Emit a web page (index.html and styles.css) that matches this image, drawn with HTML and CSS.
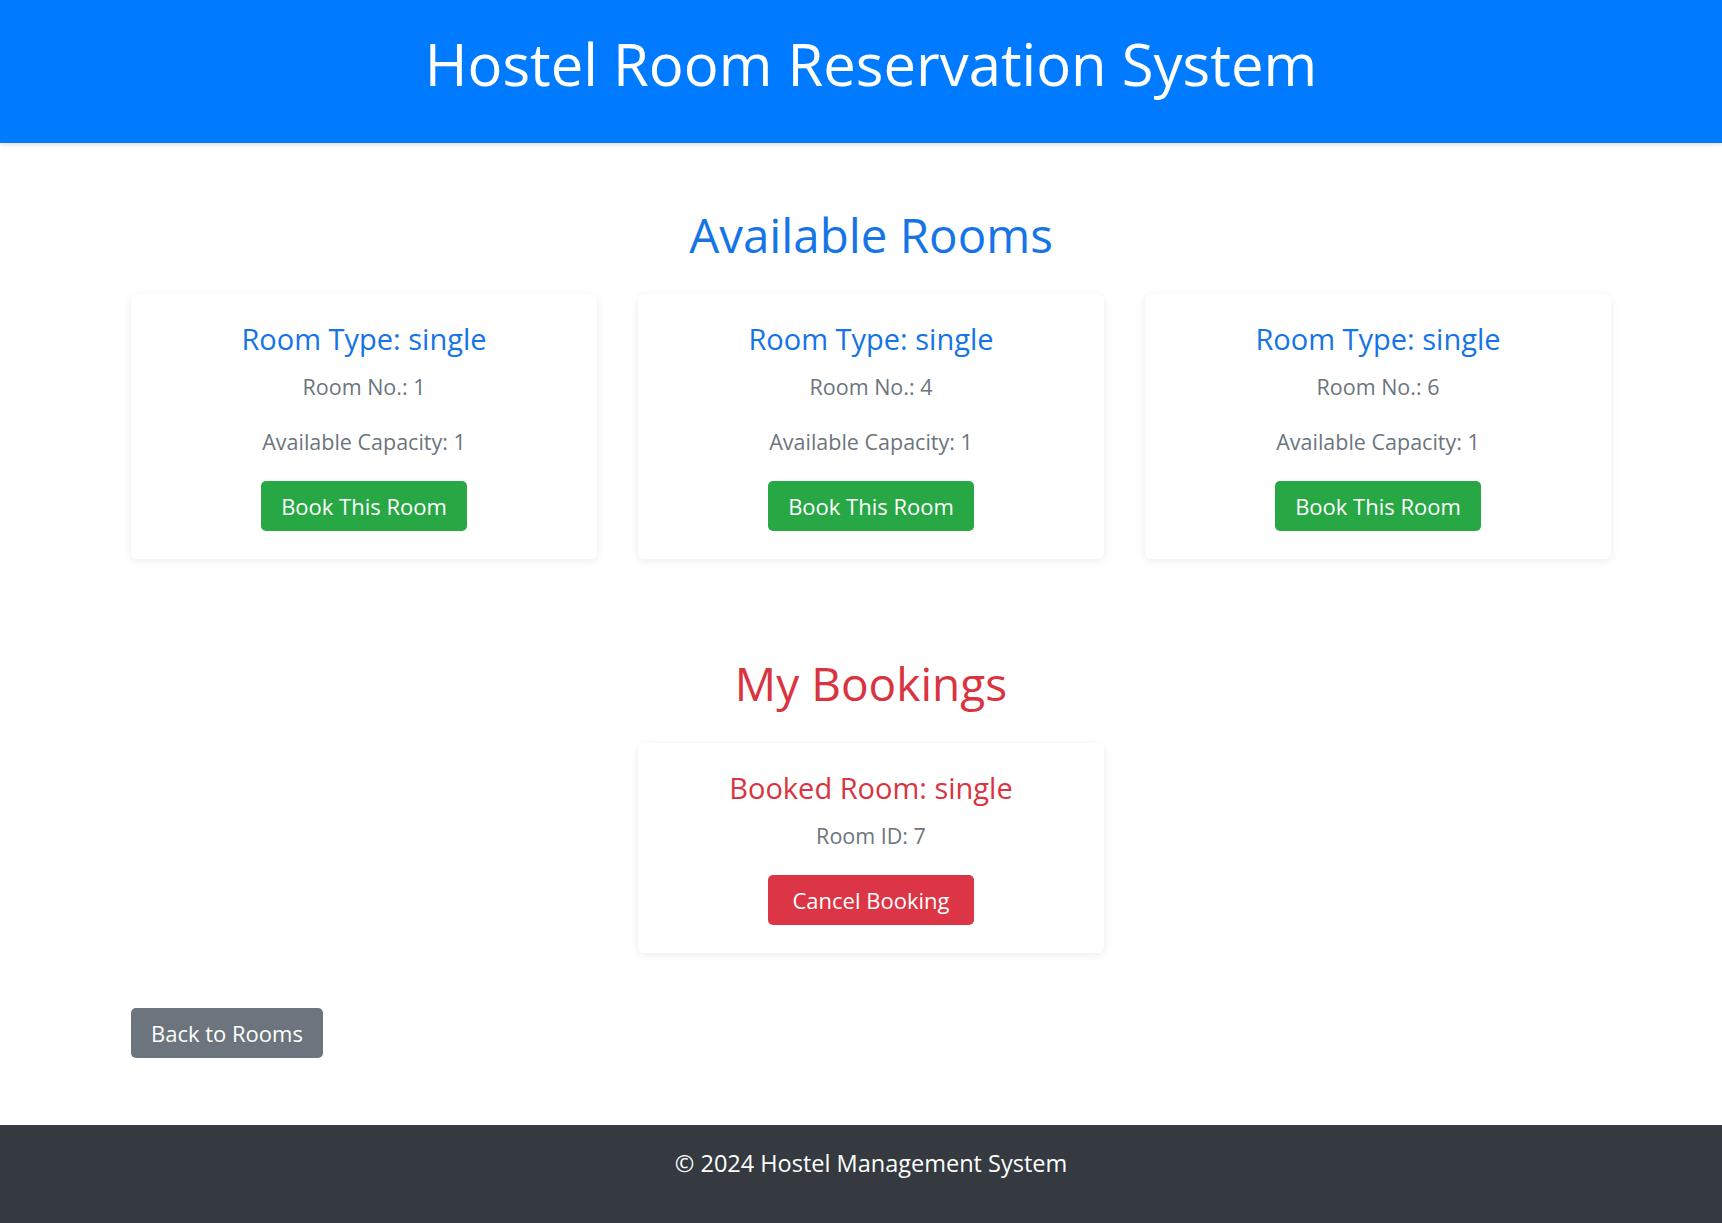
FILE: index.html
```html
<!DOCTYPE html>
<html lang="en">
<head>
<meta charset="utf-8">
<title>Hostel Room Reservation System</title>
<link rel="stylesheet" href="styles.css">
</head>
<body>
<header class="site-header">
  <h1 class="site-title">Hostel Room Reservation System</h1>
</header>
<main class="page">
  <div class="container">
    <section class="rooms-section">
      <h2 class="section-title section-title--blue">Available Rooms</h2>
      <div class="room-grid">
        <div class="card">
          <h3 class="card-title card-title--blue">Room Type: single</h3>
          <p class="card-text">Room No.: 1</p>
          <p class="card-text">Available Capacity: 1</p>
          <button class="btn btn-success">Book This Room</button>
        </div>
        <div class="card">
          <h3 class="card-title card-title--blue">Room Type: single</h3>
          <p class="card-text">Room No.: 4</p>
          <p class="card-text">Available Capacity: 1</p>
          <button class="btn btn-success">Book This Room</button>
        </div>
        <div class="card">
          <h3 class="card-title card-title--blue">Room Type: single</h3>
          <p class="card-text">Room No.: 6</p>
          <p class="card-text">Available Capacity: 1</p>
          <button class="btn btn-success">Book This Room</button>
        </div>
      </div>
    </section>
    <section class="bookings-section">
      <h2 class="section-title section-title--red">My Bookings</h2>
      <div class="booking-list">
        <div class="card booking-card">
          <h3 class="card-title card-title--red">Booked Room: single</h3>
          <p class="card-text">Room ID: 7</p>
          <button class="btn btn-danger">Cancel Booking</button>
        </div>
      </div>
    </section>
    <div class="actions">
      <button class="btn btn-secondary">Back to Rooms</button>
    </div>
  </div>
</main>
<footer class="site-footer">
  <p class="footer-text">© 2024 Hostel Management System</p>
</footer>
</body>
</html>
```
FILE: styles.css
```css
* { box-sizing: border-box; }

body {
  margin: 0;
  font-family: "Open Sans", "Liberation Sans", sans-serif;
  background: #ffffff;
  color: #212529;
}

.site-header {
  background: #007bff;
  color: #ffffff;
  text-align: center;
  padding: 29px 0 44px 20px;
  box-shadow: 0 2px 4px rgba(0, 0, 0, 0.12);
}

.site-title {
  margin: 0;
  font-size: 58px;
  line-height: 70px;
  font-weight: 400;
}

.page {
  padding-left: 20px;
}

.container {
  max-width: 1480px;
  margin: 0 auto;
  padding: 64px 0 67px;
}

.section-title {
  margin: 0 0 32px;
  text-align: center;
  font-size: 47.5px;
  line-height: 55px;
  font-weight: 400;
}

.section-title--red { font-size: 46px; }

.section-title--blue { color: #1574e6; }
.section-title--red { color: #d9343f; }

.rooms-section { margin-bottom: 97px; }

.room-grid {
  display: grid;
  grid-template-columns: repeat(3, 1fr);
  column-gap: 41px;
}

.card {
  background: #ffffff;
  border-radius: 6px;
  box-shadow: 0 2px 9px rgba(0, 0, 0, 0.08);
  padding: 27px 27px 28px;
  display: flex;
  flex-direction: column;
  align-items: center;
  text-align: center;
}

.card-title {
  margin: 0 0 15px;
  font-size: 29px;
  line-height: 35px;
  font-weight: 400;
}

.card-title--blue { color: #1574e6; }
.card-title--red { color: #d9343f; }

.card-text {
  margin: 0 0 23px;
  font-size: 21.5px;
  line-height: 32px;
  color: #6c757d;
}

.booking-list {
  display: flex;
  justify-content: center;
}

.booking-card {
  width: calc((100% - 82px) / 3);
}

.btn {
  font-family: inherit;
  font-size: 22px;
  line-height: 32px;
  padding: 9px 20px;
  border: none;
  border-radius: 5px;
  color: #ffffff;
  cursor: pointer;
}

.btn-success { background: #28a745; }
.btn-danger { background: #dc3545; padding: 9px 25px; }
.btn-secondary { background: #6c757d; }

.actions { margin-top: 55px; }

.site-footer {
  background: #343a40;
  color: #ffffff;
  text-align: center;
  padding: 22px 0 44px 20px;
}

.footer-text {
  margin: 0;
  font-size: 23.5px;
  line-height: 32px;
}
```
